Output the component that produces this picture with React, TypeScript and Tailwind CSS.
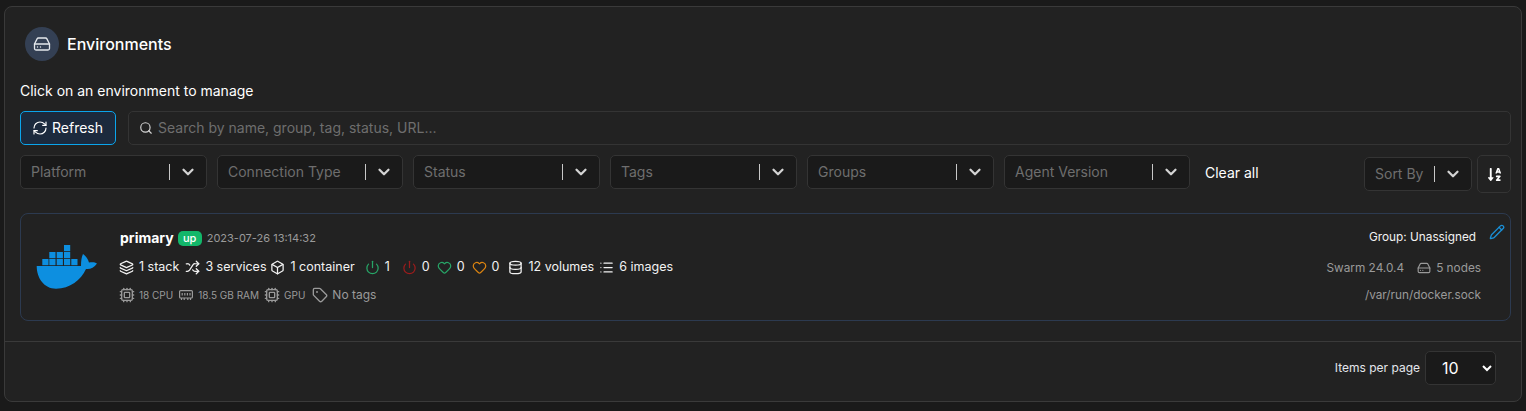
import { Box, ChevronDown, Cpu, Database, HardDrive, Heart, Layers, List, Pencil, Power, RefreshCw, Search, Shuffle, Tag } from "lucide-react"
import { FaSortAlphaDown } from "react-icons/fa"
import type { ReactNode } from "react"

const Filter = ({ label, className }: { label: string; className: string }) => {
  return (
    <div className={`flex h-[34px] items-center rounded-[5px] border border-[#343434] bg-[#1a1a1a] pl-2.5 pr-[9px] ${className}`}>
      <span className="flex-1 text-sm text-[#6e6e6e]">{label}</span>
      <span className="h-4 w-px bg-[#c8c8c8]" />
      <ChevronDown className="ml-[9px] h-[18px] w-[18px] text-[#d4d4d4]" strokeWidth={3} />
    </div>
  )
}

const Stat = ({ icon, children, className = "" }: { icon: ReactNode; children: ReactNode; className?: string }) => {
  return (
    <span className={`flex items-center gap-[5px] ${className}`}>
      {icon}
      <span>{children}</span>
    </span>
  )
}

const SmallStat = ({ icon, children, className = "" }: { icon: ReactNode; children: ReactNode; className?: string }) => {
  return (
    <span className={`flex items-center gap-1 ${className}`}>
      {icon}
      <span>{children}</span>
    </span>
  )
}

const RamIcon = () => {
  return (
    <svg viewBox="0 0 16 16" className="h-4 w-4" fill="none" stroke="currentColor" strokeWidth="1.2">
      <rect x="1.6" y="3.6" width="12.8" height="7.4" rx="1" />
      <path d="M4.2 6v2.6M6.8 6v2.6M9.4 6v2.6M12 6v2.6M3.5 11v2M6.2 11v2M9.8 11v2M12.5 11v2" />
    </svg>
  )
}

const DockerLogo = () => {
  const boxes = [
    [39, 14], [24.3, 21], [31.7, 21], [39, 21], [17.3, 28], [24.3, 28], [31.7, 28], [39, 28], [46.3, 28],
  ]
  return (
    <svg viewBox="0 0 80 65" className="h-[65px] w-20 shrink-0" fill="#0d8fe0">
      {boxes.map(([x, y]) => (
        <rect key={`${x}-${y}`} x={x} y={y} width="6.2" height="6.2" />
      ))}
      <path d="M11.7 35 H56 C56 30 56.5 26 58 23 C61 25 63 28 64 31.5 C67 31 70 31 72 32.5 C69 37 65 38.5 61 38 C56 49 45 57.7 31 57.7 C19 57.7 11.7 47 11.7 35 Z" />
    </svg>
  )
}

const App = () => {
  return (
    <div className="h-[411px] w-[1526px] bg-[#1a1a1a] pl-1 pt-1.5 font-['Inter',sans-serif] text-white">
      <section className="h-[396px] w-[1518px] rounded-lg border border-[#3a3a3a] bg-[#222222]">
        <header className="flex items-center gap-2 pl-5 pt-5">
          <div className="flex h-[34px] w-[34px] items-center justify-center rounded-full bg-[#344054]">
            <HardDrive className="h-[18px] w-[18px] text-[#e4e7ec]" strokeWidth={1.75} />
          </div>
          <h2 className="text-base font-medium">Environments</h2>
        </header>

        <div className="pl-[15px] pr-2.5">
          <p className="mt-[21px] text-sm leading-[17px]">Click on an environment to manage</p>

          <div className="mt-3 flex gap-3">
            <button className="flex h-[34px] w-24 items-center gap-1 rounded-[5px] border border-[#0ba5ec] bg-[#1c2a3d] pl-[11px] text-sm">
              <RefreshCw className="h-4 w-4" strokeWidth={1.75} />
              Refresh
            </button>
            <div className="flex h-[34px] flex-1 items-center gap-[5px] rounded-[5px] border border-[#343434] pl-2.5">
              <Search className="h-3.5 w-3.5 text-[#d4d4d4]" />
              <span className="text-sm text-[#6e6e6e]">Search by name, group, tag, status, URL...</span>
            </div>
          </div>

          <div className="mt-2.5 flex items-start">
            <div className="flex gap-2.5">
              <Filter label="Platform" className="w-[187px]" />
              <Filter label="Connection Type" className="w-[186px]" />
              <Filter label="Status" className="w-[187px]" />
              <Filter label="Tags" className="w-[187px]" />
              <Filter label="Groups" className="w-[187px]" />
              <Filter label="Agent Version" className="w-[186px]" />
            </div>
            <span className="ml-[15px] mt-[9px] text-sm leading-[17px]">Clear all</span>
            <div className="ml-auto flex gap-[5px]">
              <Filter label="Sort By" className="mt-0.5 w-[108px]" />
              <button className="flex h-[38px] w-[34px] items-center justify-center rounded-[5px] border border-[#343434]">
                <FaSortAlphaDown className="h-[15px] w-[15px]" />
              </button>
            </div>
          </div>

          <article className="mt-5 flex h-[108px] rounded-lg border border-[#2c3a50] pl-1">
            <div className="flex items-center pb-[7px] pr-[15px]">
              <DockerLogo />
            </div>
            <div className="flex flex-1 flex-col pt-[14px]">
              <div className="flex items-center leading-4">
                <span className="text-sm font-bold">primary</span>
                <span className="ml-1 w-6 rounded-[5px] bg-[#12b76a] text-center text-[11px] font-medium leading-[15px]">up</span>
                <span className="ml-[5px] text-[11px] text-[#9a9a9a]">2023-07-26 13:14:32</span>
              </div>
              <div className="mt-[11px] flex items-center text-[12.5px] leading-4 text-[#f2f2f2]">
                <Stat className="-ml-px" icon={<Layers className="h-[15px] w-[15px]" />}>1 stack</Stat>
                <Stat className="ml-1.5" icon={<Shuffle className="h-[15px] w-[15px]" />}>3 services</Stat>
                <Stat className="ml-1" icon={<Box className="h-[15px] w-[15px]" />}>1 container</Stat>
                <Stat className="ml-2.5" icon={<Power className="h-[15px] w-[15px] text-[#27a567]" />}>1</Stat>
                <Stat className="ml-3" icon={<Power className="h-[15px] w-[15px] text-[#9b1c1c]" />}>0</Stat>
                <Stat className="ml-[7px]" icon={<Heart className="h-[15px] w-[15px] text-[#27a567]" />}>0</Stat>
                <Stat className="ml-[7px]" icon={<Heart className="h-[15px] w-[15px] text-[#dc8410]" />}>0</Stat>
                <Stat className="ml-[9px]" icon={<Database className="h-[15px] w-[15px]" />}>12 volumes</Stat>
                <Stat className="ml-[5px]" icon={<List className="h-[15px] w-[15px]" />}>6 images</Stat>
              </div>
              <div className="mt-3 flex items-center text-[10px] leading-4 text-[#9a9a9a]">
                <SmallStat className="-ml-px" icon={<Cpu className="h-4 w-4" />}>18 CPU</SmallStat>
                <SmallStat className="ml-[5px]" icon={<RamIcon />}>18.5 GB RAM</SmallStat>
                <SmallStat className="ml-[5px]" icon={<Cpu className="h-4 w-4" />}>GPU</SmallStat>
                <SmallStat className="ml-[7px] text-xs" icon={<Tag className="h-4 w-4" />}>No tags</SmallStat>
              </div>
            </div>
            <div className="flex flex-col items-end pr-[29px] pt-[15px] text-[11.8px] leading-4 text-[#9a9a9a]">
              <div className="relative text-[#f2f2f2]">
                <span className="mr-[5px]">Group: Unassigned</span>
                <Pencil className="absolute -right-6 -top-[5px] h-4 w-4 text-[#1a8fd6]" />
              </div>
              <div className="mt-[15px] flex items-center">
                <span>Swarm 24.0.4</span>
                <HardDrive className="ml-[13px] h-3.5 w-3.5" />
                <span className="ml-[5px]">5 nodes</span>
              </div>
              <span className="mt-[11px]">/var/run/docker.sock</span>
            </div>
          </article>
        </div>

        <footer className="mt-5 flex items-center justify-end border-t border-[#3a3a3a] pr-[25px] pt-[9px]">
          <span className="mr-[5px] text-xs text-[#e4e7ec]">Items per page</span>
          <select defaultValue="10" className="h-[34px] w-[71px] rounded-[5px] border border-[#343434] bg-[#1a1a1a] pl-3 text-base [color-scheme:dark]">
            <option value="10">10</option>
          </select>
        </footer>
      </section>
    </div>
  )
}

export default App
